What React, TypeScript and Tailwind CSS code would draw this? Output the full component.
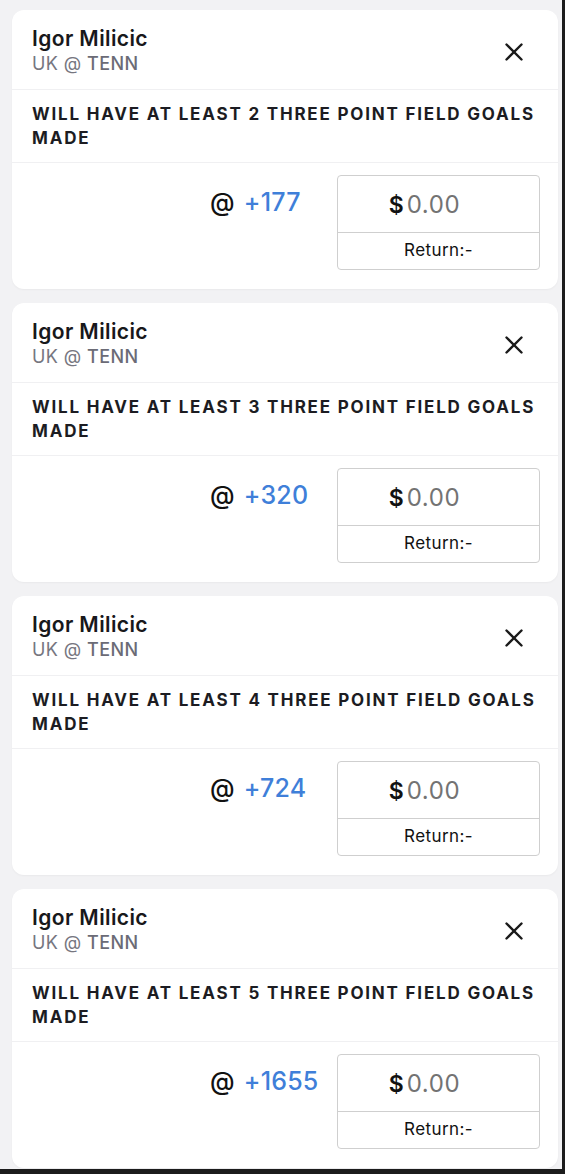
import React from "react";

const bets = [
  { n: 2, odds: "+177" },
  { n: 3, odds: "+320" },
  { n: 4, odds: "+724" },
  { n: 5, odds: "+1655" },
];

function CloseIcon() {
  return (
    <svg width="20" height="20" viewBox="0 0 20 20" fill="none">
      <path d="M2.5 2.5L17.5 17.5M17.5 2.5L2.5 17.5" stroke="#1a1a1a" strokeWidth="2.4" strokeLinecap="round" />
    </svg>
  );
}

function Card({ n, odds }: { n: number; odds: string }) {
  return (
    <div className="bg-white rounded-[12px] h-[279px] flex flex-col shadow-[0_1px_2px_rgba(0,0,0,0.04)]">
      <div className="h-[80px] flex items-center justify-between pl-[20px] pr-[34px] border-b border-[#f0f0f2]">
        <div className="flex flex-col pt-[3px]">
          <div className="text-[21px] leading-[26px] font-semibold text-[#18181b] tracking-[0.4px]">Igor Milicic</div>
          <div className="text-[18px] leading-[24px] text-[#76767f] tracking-[0.4px]">
            UK @ <span className="font-medium text-[#6b6b76]">TENN</span>
          </div>
        </div>
        <div className="mt-[5px]">
          <CloseIcon />
        </div>
      </div>
      <div className="h-[73px] pl-[20px] pr-[10px] pt-[12px] border-b border-[#f0f0f2]">
        <p className="text-[17px] leading-[24px] font-bold tracking-[1.8px] text-[#1c1c22] uppercase">
          Will have at least {n} three point field goals made
        </p>
      </div>
      <div className="flex-1 flex items-start justify-end pr-[18px] pt-[12px]">
        <div className="flex items-center h-[56px] w-[127px] text-[25px] font-medium tracking-[0.2px]">
          <span className="text-[#111]">@</span>
          <span className="ml-[9px] text-[#3f7fd9]">{odds}</span>
        </div>
        <div className="w-[203px] h-[95px] border border-[#cfcfcf] rounded-[4px] flex flex-col">
          <div className="h-[57px] flex items-center justify-center border-b border-[#cfcfcf] pr-[28px] pt-[2px]">
            <span className="text-[23px] font-semibold text-[#111]">$</span>
            <span className="text-[24px] text-[#737373] ml-[3px] tracking-[0.6px]">0.00</span>
          </div>
          <div className="flex-1 flex items-center justify-center text-[17px] text-[#111] tracking-[0.4px] pb-[1px]">Return:-</div>
        </div>
      </div>
    </div>
  );
}

export default function App() {
  return (
    <div className="w-[565px] h-[1174px] flex flex-col bg-[#1c1c1c]" style={{ fontFamily: "Inter, 'Noto Sans', sans-serif" }}>
      <div className="flex h-[1169px]">
        <div className="w-[562px] bg-[#f2f2f4] pl-[12px] pr-[4px] pt-[10px] flex flex-col gap-[14px]">
          {bets.map((b) => (
            <Card key={b.n} n={b.n} odds={b.odds} />
          ))}
        </div>
        <div className="flex-1 bg-[#1c1c1c]" />
      </div>
      <div className="h-[5px] bg-[#1c1c1c]" />
    </div>
  );
}
